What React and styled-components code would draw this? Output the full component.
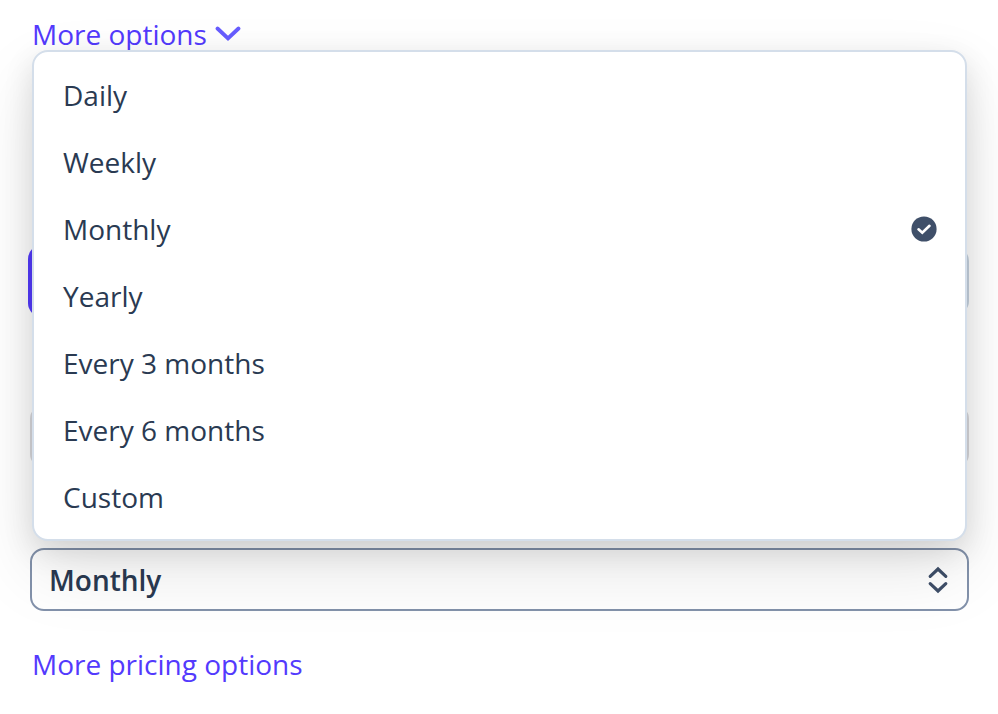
import React, { useState } from "react";
import styled, { createGlobalStyle } from "styled-components";

const GlobalStyle = createGlobalStyle`
  *, *::before, *::after { box-sizing: border-box; }
  body {
    margin: 0;
    background: #ffffff;
    color: #2a3a52;
    font-family: "Open Sans", "Noto Sans", sans-serif;
    font-size: 28px;
    line-height: 38px;
  }
  button, input, select { font: inherit; color: inherit; }
`;

const Form = styled.form`
  display: flex;
  flex-direction: column;
  padding: 15px 29px 0 30px;
  overflow: hidden;
  min-height: 100vh;
`;

const TextLink = styled.a`
  display: inline-flex;
  align-items: center;
  align-self: flex-start;
  gap: 8px;
  margin-left: 2px;
  color: #533afd;
  text-decoration: none;
`;

const Segments = styled.div`
  display: flex;
  height: 68px;
  margin-top: 194px;
`;

const Segment = styled.button`
  flex: 1;
  border: 2px solid ${(p) => (p.$active ? "#533afd" : "#c6d3e0")};
  border-radius: ${(p) => (p.$active ? "12px 0 0 12px" : "0 14px 14px 0")};
  box-shadow: ${(p) => (p.$active ? "0 0 0 2px #533afd" : "none")};
  background: #ffffff;
`;

const fieldHeight = "63px";

const TextField = styled.input`
  width: 100%;
  height: ${fieldHeight};
  margin-top: 90px;
  border: 2px solid #d8d8dc;
  border-radius: 14px;
  background: #ffffff;
`;

const SelectField = styled.div`
  display: grid;
  align-items: center;
  position: relative;
  margin-top: 80px;
`;

const Select = styled.select`
  grid-area: 1 / 1;
  appearance: none;
  width: 100%;
  height: ${fieldHeight};
  padding: 0 60px 0 17px;
  border: 2px solid #8392ab;
  border-radius: 14px;
  background: #ffffff;
  font-weight: 600;
  outline: none;
`;

const SelectIcon = styled.svg`
  grid-area: 1 / 1;
  justify-self: end;
  margin-right: 20px;
  pointer-events: none;
`;

const Menu = styled.ul`
  position: absolute;
  left: 2px;
  right: 2px;
  bottom: calc(100% + 7px);
  margin: 0;
  padding: 9px 0;
  list-style: none;
  border: 2px solid #d4deea;
  border-radius: 16px;
  background: #ffffff;
  box-shadow: 0 30px 70px rgba(0, 0, 0, 0.1), 0 10px 30px rgba(0, 0, 0, 0.12);
`;

const Option = styled.button`
  display: flex;
  align-items: center;
  justify-content: space-between;
  width: 100%;
  height: 67px;
  padding: 0 28px 0 29px;
  border: 0;
  background: none;
  text-align: left;
`;

const PricingLink = styled(TextLink)`
  margin-top: 34px;
`;

const periods = ["Daily", "Weekly", "Monthly", "Yearly", "Every 3 months", "Every 6 months", "Custom"];

const ChevronDown = () => (
  <svg width="26" height="18" viewBox="0 0 26 18" fill="none" aria-hidden="true">
    <path d="M2.5 3.5 13 13.5 23.5 3.5" stroke="#675dff" strokeWidth="3.8" strokeLinecap="round" strokeLinejoin="miter" />
  </svg>
);

const CheckCircle = () => (
  <svg width="26" height="26" viewBox="0 0 26 26" fill="none" aria-hidden="true">
    <circle cx="13" cy="13" r="12.6" fill="#3f4f69" />
    <path d="M7.5 13.3 11.3 16.8 18.5 9.8" stroke="#ffffff" strokeWidth="2.6" strokeLinecap="round" strokeLinejoin="miter" />
  </svg>
);

export default function App() {
  const [period, setPeriod] = useState("Monthly");
  return (
    <>
      <GlobalStyle />
      <Form>
        <TextLink href="#options">
          More options
          <ChevronDown />
        </TextLink>
        <Segments>
          <Segment type="button" $active aria-label="Recurring" />
          <Segment type="button" aria-label="One-off" />
        </Segments>
        <TextField type="text" aria-label="Amount" />
        <SelectField>
          <Select aria-label="Billing period" value={period} onChange={(e) => setPeriod(e.target.value)}>
            {periods.map((name) => (
              <option key={name}>{name}</option>
            ))}
          </Select>
          <SelectIcon width="22" height="28" viewBox="0 0 22 28" fill="none" aria-hidden="true">
            <path d="M3.2 10.3 11 3 18.8 10.3M3.2 17.7 11 25 18.8 17.7" stroke="#3f4f69" strokeWidth="3.2" strokeLinecap="round" />
          </SelectIcon>
          <Menu role="listbox" aria-label="Billing period">
            {periods.map((name) => (
              <li key={name} role="presentation">
                <Option type="button" role="option" aria-selected={name === period} onClick={() => setPeriod(name)}>
                  {name}
                  {name === period && <CheckCircle />}
                </Option>
              </li>
            ))}
          </Menu>
        </SelectField>
        <PricingLink href="#pricing">More pricing options</PricingLink>
      </Form>
    </>
  );
}
